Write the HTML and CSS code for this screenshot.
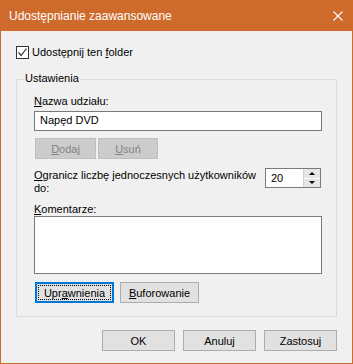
FILE: index.html
```html
<!DOCTYPE html>
<html lang="pl">

<head>
    <meta charset="UTF-8">
    <title>Udostępnianie zaawansowane</title>
    <link rel="stylesheet" href="styles.css">
</head>

<body>
    <div class="window">
        <div class="titlebar">
            <span class="title">Udostępnianie zaawansowane</span>
            <svg class="close" width="10" height="10" viewBox="0 0 10 10">
                <path d="M0.5 0.5 L9.5 9.5 M9.5 0.5 L0.5 9.5" stroke="#fff" stroke-width="1.1" fill="none" />
            </svg>
        </div>

        <div class="content">
            <label class="check">
                <span class="box">
                    <svg width="11" height="11" viewBox="0 0 11 11">
                        <path d="M1.5 5.5 L4 8.5 L9.5 1.5" stroke="#333" stroke-width="1.2" fill="none" />
                    </svg>
                </span>
                <span>Udostępnij ten <u>f</u>older</span>
            </label>

            <div class="group">
                <span class="legend">Ustawienia</span>

                <div class="label"><u>N</u>azwa udziału:</div>
                <div class="field">Napęd DVD</div>

                <div class="btn-row">
                    <button class="btn btn-disabled btn-add"><u>D</u>odaj</button>
                    <button class="btn btn-disabled btn-remove"><u>U</u>suń</button>
                </div>

                <div class="limit">
                    <span class="limit-text"><u>O</u>granicz liczbę jednoczesnych użytkowników<br>do:</span>
                    <div class="spin">
                        <span class="spin-value">20</span>
                        <span class="spin-arrows">
                            <span class="arrow-up"></span>
                            <span class="arrow-down"></span>
                        </span>
                    </div>
                </div>

                <div class="label label-comments"><u>K</u>omentarze:</div>
                <div class="memo"></div>

                <div class="btn-row btn-row-bottom">
                    <button class="btn btn-focus"><span class="focus-rect">Upr<u>a</u>wnienia</span></button>
                    <button class="btn btn-cache"><u>B</u>uforowanie</button>
                </div>
            </div>

            <div class="footer">
                <button class="btn btn-dialog">OK</button>
                <button class="btn btn-dialog">Anuluj</button>
                <button class="btn btn-dialog">Zastosuj</button>
            </div>
        </div>
    </div>
</body>

</html>
```

FILE: styles.css
```css
* {
    margin: 0;
    padding: 0;
    box-sizing: border-box;
}

body {
    font-family: 'Liberation Sans', Arial, sans-serif;
    font-size: 11px;
    line-height: 13px;
    color: #000;
    background: #f0f0f0;
}

.window {
    width: 353px;
    height: 364px;
    border: 1px solid #cd6a2c;
    border-top: none;
    background: #f0f0f0;
}

.titlebar {
    height: 31px;
    margin: 0 -1px;
    background: #cd6a2c;
    color: #fff;
    display: flex;
    align-items: center;
    justify-content: space-between;
    padding: 1px 10px 0 9px;
}

.title {
    font-size: 12px;
}

.close {
    display: block;
}

.content {
    padding: 15px 15px 0 15px;
}

/* Case à cocher */
.check {
    display: flex;
    align-items: center;
    gap: 3px;
    height: 13px;
}

.box {
    width: 13px;
    height: 13px;
    border: 1px solid #333;
    background: #fff;
    display: flex;
    align-items: center;
    justify-content: center;
}

.box svg {
    display: block;
}

/* Groupe Ustawienia */
.group {
    position: relative;
    margin-top: 20px;
    border: 1px solid #dcdcdc;
    padding: 15px 14px 13px 17px;
}

.legend {
    position: absolute;
    top: -8px;
    left: 7px;
    padding: 0 1px;
    background: #f0f0f0;
}

.field {
    margin-top: 3px;
    height: 20px;
    border: 1px solid #7a7a7a;
    background: #fff;
    padding: 2px 5px;
}

.btn {
    font-family: inherit;
    font-size: 11px;
    color: #000;
    background: #e1e1e1;
    border: 1px solid #adadad;
    height: 21px;
    display: inline-flex;
    align-items: center;
    justify-content: center;
}

.btn-row {
    display: flex;
    gap: 2px;
    margin-top: 7px;
    padding-left: 1px;
}

.btn-disabled {
    background: #cccccc;
    border-color: #bfbfbf;
    color: #838383;
}

.btn-add {
    width: 61px;
}

.btn-remove {
    width: 60px;
}

.limit {
    display: flex;
    align-items: flex-start;
    margin-top: 10px;
}

.limit-text {
    width: 225px;
}

.spin {
    margin-left: auto;
    margin-right: 1px;
    margin-top: -1px;
    width: 56px;
    height: 20px;
    border: 1px solid #7a7a7a;
    background: #fff;
    display: flex;
    align-items: center;
    padding-left: 5px;
}

.spin-value {
    flex: 1;
}

.spin-arrows {
    width: 17px;
    height: 18px;
    border-left: 1px solid #d0d0d0;
    display: flex;
    flex-direction: column;
}

.arrow-up,
.arrow-down {
    flex: 1;
    background: #e6e6e6;
    display: flex;
    align-items: center;
    justify-content: center;
}

.arrow-up {
    border-bottom: 1px solid #fff;
}

.arrow-up::before {
    content: '';
    border-left: 3px solid transparent;
    border-right: 3px solid transparent;
    border-bottom: 3px solid #000;
}

.arrow-down::before {
    content: '';
    border-left: 3px solid transparent;
    border-right: 3px solid transparent;
    border-top: 3px solid #000;
}

.label-comments {
    margin-top: 8px;
}

.memo {
    height: 58px;
    border: 1px solid #7a7a7a;
    background: #fff;
}

.btn-row-bottom {
    gap: 6px;
    margin-top: 8px;
}

.btn-focus {
    width: 79px;
    border: 2px solid #0078d7;
    padding: 1px;
}

.focus-rect {
    width: 100%;
    height: 100%;
    border: 1px dotted #000;
    display: flex;
    align-items: center;
    justify-content: center;
}

.btn-cache {
    width: 79px;
}

/* Boutons du bas */
.footer {
    display: flex;
    justify-content: flex-end;
    gap: 8px;
    margin-top: 13px;
}

.btn-dialog {
    width: 73px;
}
```
